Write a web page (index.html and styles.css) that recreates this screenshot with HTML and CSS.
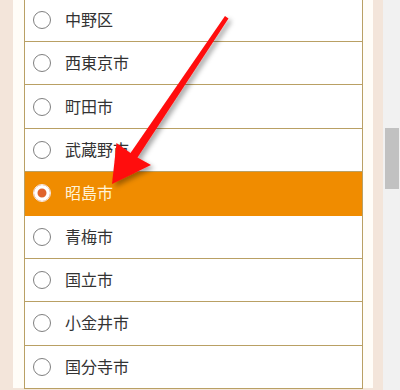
FILE: index.html
```html
<!DOCTYPE html>
<html lang="ja">
<head>
<meta charset="utf-8">
<link rel="stylesheet" href="styles.css">
</head>
<body>
<div class="screen">
  <div class="page">
    <div class="panel">
      <ul class="list">
        <li class="row"><span class="radio"></span><span class="label">中野区</span></li>
        <li class="row"><span class="radio"></span><span class="label">西東京市</span></li>
        <li class="row"><span class="radio"></span><span class="label">町田市</span></li>
        <li class="row"><span class="radio"></span><span class="label">武蔵野市</span></li>
        <li class="row selected"><span class="radio on"></span><span class="label">昭島市</span></li>
        <li class="row"><span class="radio"></span><span class="label">青梅市</span></li>
        <li class="row"><span class="radio"></span><span class="label">国立市</span></li>
        <li class="row"><span class="radio"></span><span class="label">小金井市</span></li>
        <li class="row"><span class="radio"></span><span class="label">国分寺市</span></li>
      </ul>
    </div>
  </div>
  <div class="scrollbar"><div class="thumb"></div></div>
  <svg class="arrow" width="400" height="390" viewBox="0 0 400 390">
    <defs>
      <filter id="sh" x="-20%" y="-20%" width="150%" height="150%">
        <feDropShadow dx="3" dy="3" stdDeviation="2.5" flood-color="#000" flood-opacity="0.35"/>
      </filter>
    </defs>
    <polygon filter="url(#sh)" fill="#ff0d0d" points="225,16 228.5,18.5 137.5,157.5 151,165 112,184 116.5,143 130.5,153"/>
  </svg>
</div>
</body>
</html>
```
FILE: styles.css
```css
html, body {
  margin: 0;
  padding: 0;
}
body {
  width: 400px;
  height: 390px;
  overflow: hidden;
  font-family: "Noto Sans CJK JP", "Noto Sans", sans-serif;
}
.screen {
  position: relative;
  display: flex;
  width: 400px;
  height: 390px;
}
.page {
  width: 383px;
  height: 390px;
  background: #f3e5da;
  padding: 0 10px 0 13px;
  box-sizing: border-box;
}
.panel {
  height: 100%;
  background: #fffdf8;
  padding: 0 10px 0 11px;
}
.list {
  list-style: none;
  margin: -2.375px 0 0 0;
  padding: 0;
  border-top: 1px solid #b9a064;
  border-left: 1px solid #b9a064;
  border-right: 1px solid #b9a064;
}
.row {
  display: flex;
  align-items: center;
  height: 42.375px;
  border-bottom: 1px solid #b9a064;
  background: #fff;
  padding-left: 8px;
  color: #333;
  font-size: 16px;
}
.row.selected {
  background: #f08c00;
  border-bottom-color: #f08c00;
  color: #fff3d6;
}
.radio {
  width: 16px;
  height: 16px;
  border: 1.2px solid #7f7f7f;
  border-radius: 50%;
  background: #fff;
  margin-right: 14px;
  flex: none;
  box-sizing: content-box;
}
.radio.on {
  border-color: #f6e9df;
  background: #e0632c;
  box-shadow: inset 0 0 0 3.5px #fff;
}
.label {
  line-height: 1;
  position: relative;
  top: -1px;
}
.scrollbar {
  width: 17px;
  height: 390px;
  background: #f1f1f1;
  padding: 128px 1px 0 2px;
  box-sizing: border-box;
}
.thumb {
  height: 61px;
  background: #c1c1c1;
}
.arrow {
  position: absolute;
  left: 0;
  top: 0;
  pointer-events: none;
}
```
